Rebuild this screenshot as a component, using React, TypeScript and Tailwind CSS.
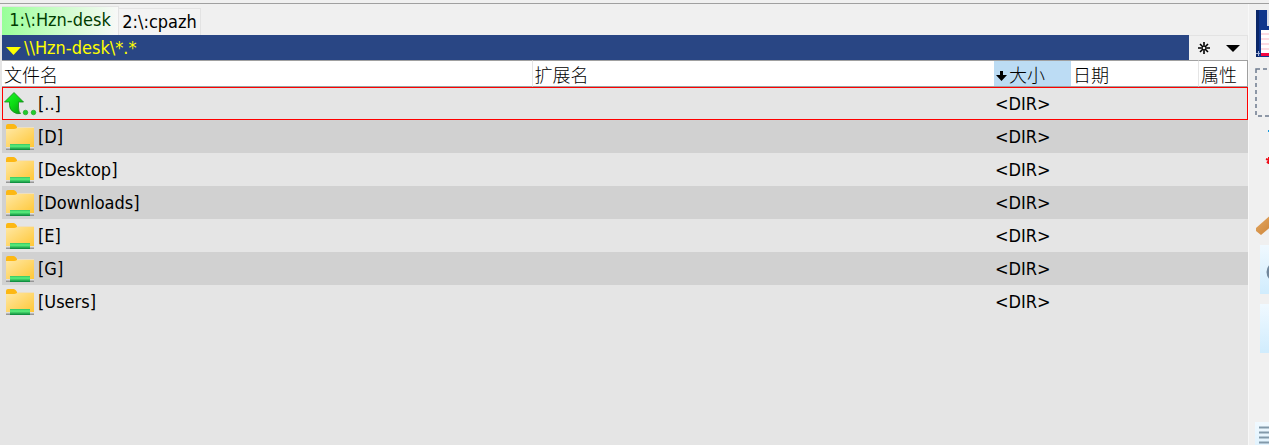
import type { ReactNode } from "react";

const uiFont = "font-['DejaVu_Sans_Condensed','Noto_Sans',sans-serif]";

const rows = ["D", "Desktop", "Downloads", "E", "G", "Users"];

function FolderIcon() {
  return (
    <svg width="30" height="28" viewBox="0 0 30 28" className="shrink-0" aria-hidden="true">
      <defs>
        <linearGradient id="folder" x1="0" y1="0" x2="1" y2="1">
          <stop offset="0" stopColor="#ffe8a4" />
          <stop offset="1" stopColor="#ffc737" />
        </linearGradient>
        <linearGradient id="plug" x1="0" y1="0" x2="0" y2="1">
          <stop offset="0" stopColor="#35c463" />
          <stop offset=".35" stopColor="#5cf27e" />
          <stop offset="1" stopColor="#068238" />
        </linearGradient>
        <linearGradient id="cable" x1="0" y1="0" x2="0" y2="1">
          <stop offset="0" stopColor="#f0f0f0" />
          <stop offset="1" stopColor="#858585" />
        </linearGradient>
      </defs>
      <path d="M1 3Q1 1 3 1H8.500Q10 1 11 2.500L12 4H29V7H1Z" fill="#fdb813" />
      <path d="M12 4H29V5H12Z" fill="#eedfc0" />
      <path d="M1 6H9Q10.500 6 12 5H29V24H1Z" fill="url(#folder)" />
      <rect x="1" y="24" width="28" height="3" fill="url(#cable)" />
      <rect x="5" y="21" width="20" height="6" fill="url(#plug)" />
    </svg>
  );
}

function UpIcon() {
  return (
    <svg width="33" height="26" viewBox="0 0 33 26" className="shrink-0" aria-hidden="true">
      <defs>
        <linearGradient id="up" x1="0" y1="0" x2="1" y2="1">
          <stop offset="0" stopColor="#20f52c" />
          <stop offset=".5" stopColor="#0cdc14" />
          <stop offset="1" stopColor="#07920e" />
        </linearGradient>
      </defs>
      <path
        d="M10 1.500L19.500 11H14.500V16Q14.500 21 16.500 22.500Q12.500 23.500 9.500 21Q5.500 18.500 5.500 14.500V11H.5Z"
        fill="url(#up)"
        stroke="#128a18"
        strokeWidth=".8"
      />
      <circle cx="21.500" cy="21.500" r="2.300" fill="#22cb2b" stroke="#159c1d" strokeWidth=".6" />
      <circle cx="29.500" cy="21.500" r="2.300" fill="#22cb2b" stroke="#159c1d" strokeWidth=".6" />
    </svg>
  );
}

function Tool({ label, children }: { label: string; children?: ReactNode }) {
  return (
    <button type="button" aria-label={label} className="block h-[49px] w-12 shrink-0">
      <svg width="48" height="49" viewBox="0 0 48 49" aria-hidden="true">
        <defs>
          <linearGradient id="tile" x1="0" y1="0" x2="0" y2="1">
            <stop offset="0" stopColor="#f0f9ff" />
            <stop offset="1" stopColor="#d0ecfd" />
          </linearGradient>
          <linearGradient id="handle" x1="0" y1="0" x2="1" y2="1">
            <stop offset="0" stopColor="#e5ad69" />
            <stop offset="1" stopColor="#c97b2d" />
          </linearGradient>
        </defs>
        {children}
      </svg>
    </button>
  );
}

function Toolbar() {
  return (
    <aside className="flex w-5 shrink-0 flex-col gap-2.5 overflow-hidden pt-[5px] pl-1.5">
      <Tool label="Save">
        <rect x="1" y="1" width="47" height="47" fill="#10368c" />
        <path d="M1 1H4V48H1Z" fill="#0a2668" />
        <rect x="12" y="1" width="30" height="16" fill="#d9dce8" />
        <rect x="6" y="21" width="42" height="23" fill="#fff" />
        <path d="M6 25H48M6 30H48M6 35H48M6 40H48" stroke="#f8b7c5" />
        <rect x="6" y="44" width="42" height="3" fill="#f40642" />
        <path d="M1 44.500H5M3.500 42V47" stroke="#a8b5da" />
      </Tool>
      <Tool label="Select">
        <rect x="1" y="1" width="46" height="47" fill="none" stroke="#6c7a8d" strokeWidth="1.500" strokeDasharray="4 3" />
      </Tool>
      <Tool label="Filter">
        <path d="M13 3H24V5H13Z" fill="#169bdf" />
        <path d="M11 32L20 35M14 30V37M12 36L18 30" stroke="#f00a16" strokeWidth="2" />
      </Tool>
      <Tool label="Edit">
        <path d="M1 42L18 27L24 34L6 49L1 45Z" fill="url(#handle)" />
      </Tool>
      <Tool label="Search">
        <rect x="5" width="43" height="49" fill="url(#tile)" />
        <circle cx="22" cy="27" r="9" fill="none" stroke="#71879c" strokeWidth="3" />
      </Tool>
      <Tool label="View">
        <rect x="5" width="43" height="49" fill="url(#tile)" />
      </Tool>
      <Tool label="Blank" />
      <Tool label="List">
        <rect width="48" height="49" fill="url(#tile)" />
        <path d="M4 5.500H44M4 10.500H44M4 15.500H44M4 20.500H44" stroke="#8299aa" strokeWidth="2" />
      </Tool>
    </aside>
  );
}

function PathBar() {
  return (
    <div className="flex h-[25px] bg-[#294684]">
      <button type="button" className="flex min-w-0 grow items-center gap-[3px] pl-1 text-left text-[#ffff00]">
        <svg width="15" height="8" viewBox="0 0 15 8" className="mt-1.5 shrink-0" aria-hidden="true">
          <path d="M0 0H15L7.500 8Z" fill="currentColor" />
        </svg>
        <span className="leading-6">{"\\\\Hzn-desk\\*.*"}</span>
      </button>
      <div className="flex w-[59px] shrink-0 border-t border-r border-[#e3e3e3] bg-[#f0f0f0]">
        <button type="button" aria-label="Favourites" className="flex w-[30px] items-center justify-center">
          <svg width="12" height="12" viewBox="0 0 12 12" aria-hidden="true">
            <path d="M6 0V12M0 6H12M2 2L10 10M10 2L2 10" stroke="#000" strokeWidth="1.600" />
            <circle cx="6" cy="6" r="1.300" fill="#f0f0f0" />
          </svg>
        </button>
        <button type="button" aria-label="History" className="flex w-7 items-center justify-center">
          <svg width="14" height="7" viewBox="0 0 14 7" aria-hidden="true">
            <path d="M0 0H14L7 7Z" fill="#000" />
          </svg>
        </button>
      </div>
    </div>
  );
}

function Head({ className = "", children }: { className?: string; children: ReactNode }) {
  return (
    <th
      scope="col"
      className={`h-[27px] border-y border-[#a0a0a0] p-0 text-left font-['Noto_Sans_CJK_SC',sans-serif] font-light ${className}`}
    >
      <button type="button" className="flex h-[25px] w-full items-center pl-0.5 leading-6 whitespace-nowrap">
        {children}
      </button>
    </th>
  );
}

function FileTable() {
  return (
    <table className="w-full table-fixed border-separate border-spacing-0">
      <colgroup>
        <col className="w-[42.5%]" />
        <col />
        <col className="w-[77px]" />
        <col className="w-[127px]" />
        <col className="w-[50px]" />
      </colgroup>
      <thead className="bg-white">
        <tr>
          <Head>文件名</Head>
          <Head className="border-l border-l-[#e5e5e5]">扩展名</Head>
          <Head className="bg-[#bcdcf4]">
            <svg width="11" height="10" viewBox="0 0 11 10" className="mt-1 mr-0.5 shrink-0" aria-hidden="true">
              <path d="M4 0H7V4H11L5.500 10L0 4H4Z" fill="#000" />
            </svg>
            大小
          </Head>
          <Head>日期</Head>
          <Head className="border-r border-l border-r-[#a0a0a0] border-l-[#e5e5e5]">属性</Head>
        </tr>
      </thead>
      <tbody>
        <tr className="outline-1 -outline-offset-1 outline-[#ff0000]">
          <td colSpan={2} className="h-[33px] p-0">
            <div className="flex items-center gap-px pl-0.5 leading-6">
              <UpIcon />
              [..]
            </div>
          </td>
          <td className="p-0 pl-px leading-6">&lt;DIR&gt;</td>
          <td className="p-0" />
          <td className="p-0" />
        </tr>
        {rows.map((name) => (
          <tr key={name} className="odd:bg-[#e5e5e5] even:bg-[#d1d1d1]">
            <td colSpan={2} className="h-[33px] p-0">
              <div className="flex items-center gap-[3px] pl-[3px] leading-6">
                <FolderIcon />
                [{name}]
              </div>
            </td>
            <td className="p-0 pl-px leading-6">&lt;DIR&gt;</td>
            <td className="p-0" />
            <td className="p-0" />
          </tr>
        ))}
      </tbody>
    </table>
  );
}

export default function App() {
  return (
    <div className={`flex h-screen flex-col overflow-hidden bg-[#f0f0f0] pt-[3px] text-lg text-black ${uiFont}`}>
      <div className="flex min-h-0 grow border-t border-[#a0a0a0]">
        <main className="flex min-w-0 grow flex-col border-r border-[#f8f8f8]">
          <div role="tablist" className="flex h-[31px] items-end pt-0.5 pl-0.5">
            <button
              type="button"
              role="tab"
              aria-selected="true"
              className="h-[29px] w-[117px] border-t border-r border-[#e3e3e3] bg-linear-to-r from-[#98ff98] to-[#f8f8f8] pb-0.5 leading-6 whitespace-nowrap text-[#003c00]"
            >
              {"1:\\:Hzn-desk"}
            </button>
            <button
              type="button"
              role="tab"
              aria-selected="false"
              className="h-[27px] w-[82px] border-t border-r border-[#e3e3e3] bg-[#f3f3f3] leading-6 whitespace-nowrap"
            >
              {"2:\\:cpazh"}
            </button>
          </div>
          <div className="flex grow flex-col bg-[#e5e5e5] pl-0.5">
            <PathBar />
            <FileTable />
          </div>
        </main>
        <Toolbar />
      </div>
    </div>
  );
}
